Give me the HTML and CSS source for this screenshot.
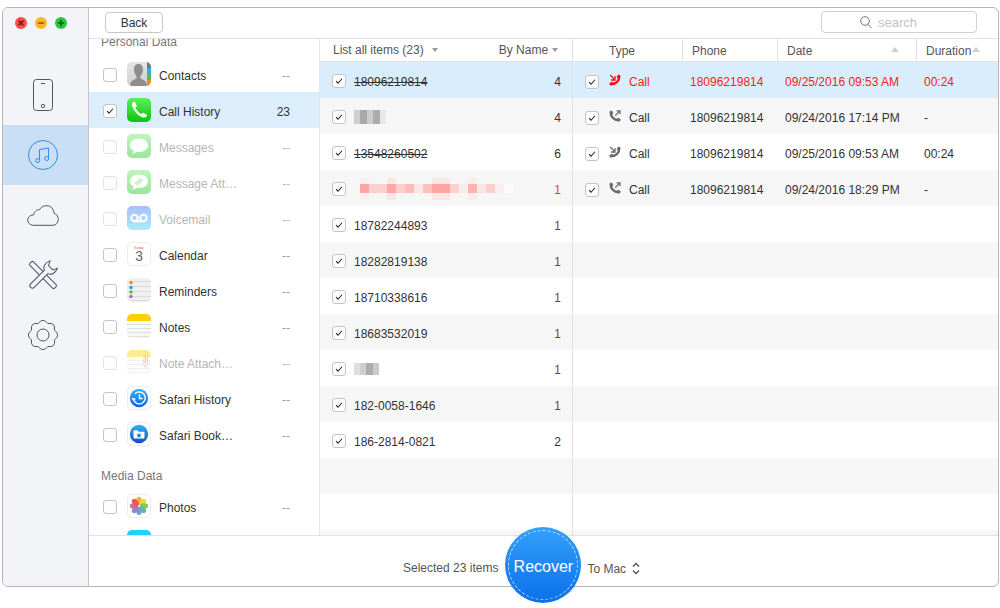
FILE: index.html
```html
<!DOCTYPE html>
<html lang="en">
<head>
<meta charset="utf-8">
<title>Recover</title>
<link rel="stylesheet" href="styles.css">
</head>
<body>
<svg class="sprite" width="0" height="0" aria-hidden="true">
  <symbol id="chk" viewBox="0 0 14 14"><path d="M3.6 7.2 L5.9 9.6 L10.4 4.4" fill="none" stroke="currentColor" stroke-width="1.2"/></symbol>
  <symbol id="out" viewBox="0 0 12 12">
    <path d="M1.7 2 C1.7 6.8 5 10.2 10 10.3" fill="none" stroke="currentColor" stroke-width="2.5"/>
    <path d="M.4 1.6 L3 .4 L4.3 3.4 L2.6 4.6Z M7.4 9.6 L8.9 7.8 L11.8 9.2 L10.8 11.8Z" fill="currentColor"/>
    <path d="M6.2 5.6 L10.8 1 M7.6 .9 H11 V4.3" fill="none" stroke="currentColor" stroke-width="1.2"/>
  </symbol>
  <symbol id="in" viewBox="0 0 12 12">
    <path d="M10.3 2 C10.3 6.8 7 10.2 2 10.3" fill="none" stroke="currentColor" stroke-width="2.5"/>
    <path d="M11.6 1.6 L9 .4 L7.7 3.4 L9.4 4.6Z M4.6 9.6 L3.1 7.8 L.2 9.2 L1.2 11.8Z" fill="currentColor"/>
    <path d="M1.2 1 L5.8 5.6 M2 6 H6 V2" fill="none" stroke="currentColor" stroke-width="1.3"/>
  </symbol>
  <symbol id="bubble" viewBox="0 0 24 24"><path d="M12 4.5 C6.5 4.5 3 7.6 3 11.2 C3 13.6 4.4 15.5 6.6 16.7 C6.3 18 5.6 19 5 19.6 C6.8 19.6 8.4 19 9.6 17.8 C10.4 17.9 11.2 18 12 18 C17.5 18 21 14.8 21 11.2 C21 7.6 17.5 4.5 12 4.5Z" fill="#fff"/></symbol>
</svg>
<div class="window">
  <aside class="sidebar">
    <div class="lights">
      <span class="light l-red"><svg viewBox="0 0 12 12"><path d="M3.6 3.6 L8.4 8.4 M8.4 3.6 L3.6 8.4" stroke="#8c1512" stroke-width="1.6"/></svg></span>
      <span class="light l-yellow"><svg viewBox="0 0 12 12"><path d="M3 6 H9" stroke="#90590a" stroke-width="1.6"/></svg></span>
      <span class="light l-green"><svg viewBox="0 0 12 12"><path d="M2.8 6 H9.2 M6 2.8 V9.2" stroke="#0a5e12" stroke-width="1.6"/></svg></span>
    </div>
    <nav class="nav">
      <div class="nav-item"><svg width="20" height="32" viewBox="0 0 20 32" fill="none" stroke="#4b5864"><rect x=".5" y=".5" width="19" height="31" rx="3"/><path d="M8 4.500 H12"/><circle cx="10" cy="27" r="1.700"/></svg></div>
      <div class="nav-item active"><svg width="30" height="30" viewBox="0 0 30 30" fill="none" stroke="#2a8cf0"><circle cx="15" cy="15" r="14.500"/><path d="M11.500 20 V9.500 L20.500 8 V18"/><circle cx="9.700" cy="20.500" r="2"/><circle cx="18.700" cy="18.500" r="2"/></svg></div>
      <div class="nav-item"><svg width="32" height="21" viewBox="0 0 32 21" fill="none" stroke="#4b5864"><path d="M7 20.300 C3 20.300 .7 17.800 .7 15 C.7 12 3.200 10 6.500 10 C7.500 6 10 4.300 12.400 4.800 C14 1.800 17 .7 19.500 .7 C24 .7 26.800 4 26.800 8 C29.500 9 31.300 11.500 31.300 14.500 C31.300 18 28.500 20.300 26 20.300Z"/></svg></div>
      <div class="nav-item"><svg width="32" height="32" viewBox="0 0 32 32" fill="#f2f4f8" stroke="#4b5864"><rect x="13.500" y="-1.500" width="5" height="35" rx="1.500" transform="rotate(-45 16 16)"/><path d="M13.500 31 a2.500 2.500 0 0 0 5 0 L18.500 11.500 C22 10.500 23.500 6 21.500 1 L19.300 5.500 L13.300 5.500 L11 1 C8.500 6 10 10.500 13.500 11.500Z" transform="rotate(45 16 16)"/></svg></div>
      <div class="nav-item"><svg width="30" height="30" viewBox="0 0 30 30" fill="none" stroke="#4b5864"><path d="M26.500 10.200 Q33 15 26.500 19.800 Q27.700 27.700 19.800 26.500 Q15 33 10.200 26.500 Q2.300 27.700 3.500 19.800 Q-3 15 3.500 10.200 Q2.300 2.300 10.200 3.500 Q15 -3 19.800 3.500 Q27.700 2.300 26.500 10.200Z"/><circle cx="15" cy="15" r="6"/></svg></div>
    </nav>
  </aside>
  <div class="main">
    <header class="toolbar">
      <button class="back">Back</button>
      <div class="search"><svg width="12" height="13" viewBox="0 0 12 13" fill="none" stroke="#777"><circle cx="5" cy="5" r="4.300"/><path d="M8 8.300 L11.500 12"/></svg><span>search</span></div>
    </header>
    <div class="content">
      <section class="cats">
        <div class="cat-label first">Personal Data</div>
        <div class="cat"><span class="cb"></span><span class="tile t-contacts"><svg viewBox="0 0 24 24"><path d="M3 24 C3 19 7 17.500 9.500 16.500 V14 C8 12.500 7 10 7 7.500 C7 3.500 9 2 11.500 2 C14 2 16 3.500 16 7.500 C16 10 15 12.500 13.500 14 V16.500 C16 17.500 20 19 20 24Z" fill="#8d8d8d"/><rect x="20" y="0" width="4" height="6" fill="#777"/><rect x="20" y="6" width="4" height="6" fill="#3aa6e0"/><rect x="20" y="12" width="4" height="6" fill="#5cb85c"/><rect x="20" y="18" width="4" height="6" fill="#ef8a1c"/></svg></span><span class="name">Contacts</span><span class="num">--</span></div>
        <div class="cat sel"><span class="cb"><svg><use href="#chk"/></svg></span><span class="tile t-phone"><svg viewBox="0 0 24 24"><path d="M6.500 4 C5 5 4.500 6.500 5.500 9 C7 13 10.500 17 14.500 19 C16.500 20 18.500 19.800 19.800 18.300 C20.200 17.800 20 17.200 19.500 16.800 L16.800 15 C16.200 14.600 15.700 14.800 15.200 15.300 L14.300 16.200 C12 15 9.500 12.200 8.400 9.800 L9.300 8.900 C9.800 8.400 9.900 7.800 9.600 7.300 L8 4.300 C7.600 3.800 7 3.700 6.500 4Z" fill="#fff"/></svg></span><span class="name">Call History</span><span class="num dark">23</span></div>
        <div class="cat off"><span class="cb"></span><span class="tile t-msg"><svg><use href="#bubble"/></svg></span><span class="name">Messages</span><span class="num">--</span></div>
        <div class="cat off"><span class="cb"></span><span class="tile t-msg"><svg><use href="#bubble"/></svg><svg class="clip" viewBox="0 0 24 24"><path d="M8 14 L14 8.500 M10 15 L16 9.500" stroke="#6fd06f" stroke-width="1.500" fill="none"/></svg></span><span class="name">Message Att…</span><span class="num">--</span></div>
        <div class="cat off"><span class="cb"></span><span class="tile t-voice"><svg viewBox="0 0 24 24" fill="none" stroke="#fff" stroke-width="2"><circle cx="7.500" cy="12" r="3.200"/><circle cx="16.500" cy="12" r="3.200"/><path d="M7.500 15.200 H16.500"/></svg></span><span class="name">Voicemail</span><span class="num">--</span></div>
        <div class="cat"><span class="cb"></span><span class="tile t-white"><svg viewBox="0 0 24 24"><text x="12" y="6.500" text-anchor="middle" class="cal-day">Sunday</text><text x="12" y="20" text-anchor="middle" class="cal-num">3</text></svg></span><span class="name">Calendar</span><span class="num">--</span></div>
        <div class="cat"><span class="cb"></span><span class="tile t-rem"><svg viewBox="0 0 24 24"><g stroke="#dcdcdc"><path d="M0 3.500 H24 M0 8.500 H24 M0 13.500 H24 M0 18.500 H24 M0 22.500 H24"/></g><circle cx="4" cy="4.500" r="1.700" fill="#f5871f"/><circle cx="4" cy="9.500" r="1.700" fill="#1e9bf0"/><circle cx="4" cy="14" r="1.700" fill="#3cc63c"/><circle cx="4" cy="18.500" r="1.700" fill="#c45ae0"/></svg></span><span class="name">Reminders</span><span class="num">--</span></div>
        <div class="cat"><span class="cb"></span><span class="tile t-notes"><svg viewBox="0 0 24 24"><g stroke="#dedede"><path d="M0 10.500 H24 M0 14.500 H24 M0 18.500 H24 M0 22.500 H24"/></g></svg></span><span class="name">Notes</span><span class="num">--</span></div>
        <div class="cat off"><span class="cb"></span><span class="tile t-notes"><svg viewBox="0 0 24 24"><g stroke="#dedede"><path d="M0 10.500 H24 M0 14.500 H24 M0 18.500 H24 M0 22.500 H24"/></g><path d="M17 5 V15 C17 17.500 20.500 17.500 20.500 15 V3.500 C20.500 1.500 18.500 1.500 18.500 3.500 V13" fill="none" stroke="#c9a23a"/></svg></span><span class="name">Note Attach…</span><span class="num">--</span></div>
        <div class="cat"><span class="cb"></span><span class="tile t-white"><svg viewBox="0 0 24 24"><defs><linearGradient id="gh" x1="0" y1="0" x2="0" y2="1"><stop offset="0" stop-color="#38b4f8"/><stop offset="1" stop-color="#1060e0"/></linearGradient></defs><circle cx="12" cy="12" r="10" fill="url(#gh)"/><path d="M6 13.500 A6.500 6.500 0 1 0 7.500 7.500 M12.500 8 V12.500 H16 M4.500 12 L6 14 L8 12.500" fill="none" stroke="#fff" stroke-width="1.500"/></svg></span><span class="name">Safari History</span><span class="num">--</span></div>
        <div class="cat"><span class="cb"></span><span class="tile t-white"><svg viewBox="0 0 24 24"><defs><linearGradient id="gb" x1="0" y1="0" x2="0" y2="1"><stop offset="0" stop-color="#30b0f8"/><stop offset="1" stop-color="#0a50c0"/></linearGradient></defs><circle cx="12" cy="12" r="10" fill="url(#gb)"/><path d="M6 9.500 C6 8.500 6.500 8 7.500 8 H10.500 L11.500 9.500 H16.500 C17.500 9.500 18 10 18 11 V15.500 C18 16.500 17.500 17 16.500 17 H7.500 C6.500 17 6 16.500 6 15.500Z" fill="#fff"/><path d="M12 10.500 L12.900 12.500 L15 12.700 L13.400 14 L13.900 16 L12 15 L10.100 16 L10.600 14 L9 12.700 L11.100 12.500Z" fill="#1a70e0"/></svg></span><span class="name">Safari Book…</span><span class="num">--</span></div>
        <div class="cat-label">Media Data</div>
        <div class="cat"><span class="cb"></span><span class="tile t-white"><svg viewBox="0 0 24 24"><g class="petals"><ellipse cx="12" cy="6.500" rx="3" ry="4.500" fill="#f6a623"/><ellipse cx="12" cy="6.500" rx="3" ry="4.500" fill="#e8d32e" transform="rotate(45 12 12)"/><ellipse cx="12" cy="6.500" rx="3" ry="4.500" fill="#7cc243" transform="rotate(90 12 12)"/><ellipse cx="12" cy="6.500" rx="3" ry="4.500" fill="#4fb58f" transform="rotate(135 12 12)"/><ellipse cx="12" cy="6.500" rx="3" ry="4.500" fill="#5a9bd8" transform="rotate(180 12 12)"/><ellipse cx="12" cy="6.500" rx="3" ry="4.500" fill="#8a78c8" transform="rotate(225 12 12)"/><ellipse cx="12" cy="6.500" rx="3" ry="4.500" fill="#c75a9a" transform="rotate(270 12 12)"/><ellipse cx="12" cy="6.500" rx="3" ry="4.500" fill="#e8483c" transform="rotate(315 12 12)"/></g></svg></span><span class="name">Photos</span><span class="num">--</span></div>
        <div class="cat"><span class="cb hidden"></span><span class="tile t-video"></span></div>
      </section>
      <section class="list">
        <div class="list-head"><span>List all items (23)</span><i class="caret"></i><span class="by">By Name</span><i class="caret tight"></i></div>
        <div class="rows">
          <div class="row sel"><span class="cb"><svg><use href="#chk"/></svg></span><span class="lbl struck">18096219814</span><span class="cnt">4</span></div>
          <div class="row"><span class="cb"><svg><use href="#chk"/></svg></span><svg class="mosaic" width="33" height="16" viewBox="0 0 33 16" shape-rendering="crispEdges"><rect x="1" y="1" width="6" height="14" fill="#cfcfcf"/><rect x="7" y="1" width="7" height="14" fill="#a8a8a8"/><rect x="14" y="1" width="6" height="14" fill="#cccccc"/><rect x="20" y="1" width="7" height="14" fill="#acacac"/><rect x="27" y="1" width="6" height="14" fill="#e8e8e8"/></svg><span class="cnt">4</span></div>
          <div class="row"><span class="cb"><svg><use href="#chk"/></svg></span><span class="lbl struck">13548260502</span><span class="cnt">6</span></div>
          <div class="row"><span class="cb"><svg><use href="#chk"/></svg></span><svg class="mosaic wide" width="154" height="22" viewBox="0 0 154 22" shape-rendering="crispEdges"><rect x="0" y="0" width="9" height="22" fill="#fbeeee"/><rect x="0" y="6" width="9" height="9" fill="#fca5a5"/><rect x="9" y="6" width="18" height="9" fill="#fbd0ce"/><rect x="27" y="0" width="9" height="22" fill="#fbe6e5"/><rect x="27" y="6" width="9" height="9" fill="#fca8a6"/><rect x="36" y="6" width="9" height="9" fill="#fbcfcd"/><rect x="45" y="6" width="9" height="9" fill="#fcbdbb"/><rect x="54" y="6" width="9" height="9" fill="#f9e6e6"/><rect x="63" y="6" width="9" height="9" fill="#fcc0be"/><rect x="72" y="0" width="18" height="22" fill="#fbe6e5"/><rect x="72" y="6" width="18" height="9" fill="#fca6a3"/><rect x="90" y="6" width="9" height="9" fill="#fcd2d0"/><rect x="99" y="6" width="9" height="9" fill="#f9ecec"/><rect x="108" y="0" width="9" height="22" fill="#fbecec"/><rect x="108" y="6" width="9" height="9" fill="#fcb4b2"/><rect x="117" y="6" width="9" height="9" fill="#f8e6e6"/><rect x="126" y="6" width="9" height="9" fill="#fccfcd"/><rect x="135" y="6" width="9" height="9" fill="#f8eeee"/><rect x="144" y="6" width="9" height="9" fill="#fafafa"/></svg><span class="cnt warn">1</span></div>
          <div class="row"><span class="cb"><svg><use href="#chk"/></svg></span><span class="lbl">18782244893</span><span class="cnt tinted">1</span></div>
          <div class="row"><span class="cb"><svg><use href="#chk"/></svg></span><span class="lbl">18282819138</span><span class="cnt tinted">1</span></div>
          <div class="row"><span class="cb"><svg><use href="#chk"/></svg></span><span class="lbl">18710338616</span><span class="cnt tinted">1</span></div>
          <div class="row"><span class="cb"><svg><use href="#chk"/></svg></span><span class="lbl">18683532019</span><span class="cnt tinted">1</span></div>
          <div class="row"><span class="cb"><svg><use href="#chk"/></svg></span><svg class="mosaic short" width="33" height="14" viewBox="0 0 33 14" shape-rendering="crispEdges"><rect x="1" y="1" width="6" height="12" fill="#dfdfdf"/><rect x="7" y="1" width="6" height="12" fill="#cfcfcf"/><rect x="13" y="1" width="7" height="12" fill="#b0abb0"/><rect x="20" y="1" width="6" height="12" fill="#cdc8cd"/></svg><span class="cnt tinted">1</span></div>
          <div class="row"><span class="cb"><svg><use href="#chk"/></svg></span><span class="lbl">182-0058-1646</span><span class="cnt tinted">1</span></div>
          <div class="row"><span class="cb"><svg><use href="#chk"/></svg></span><span class="lbl">186-2814-0821</span><span class="cnt">2</span></div>
          <div class="row"></div>
          <div class="row"></div>
          <div class="row"></div>
        </div>
      </section>
      <section class="detail">
        <div class="detail-head">
          <div class="th th-type">Type</div>
          <div class="th">Phone</div>
          <div class="th th-date">Date<i class="caret up"></i></div>
          <div class="th th-dur">Duration<i class="caret up near"></i></div>
        </div>
        <div class="rows">
          <div class="drow sel alert"><div class="td td-type"><span class="cb"><svg><use href="#chk"/></svg></span><svg class="call"><use href="#in"/></svg><span>Call</span></div><div class="td">18096219814</div><div class="td">09/25/2016 09:53 AM</div><div class="td">00:24</div></div>
          <div class="drow"><div class="td td-type"><span class="cb"><svg><use href="#chk"/></svg></span><svg class="call"><use href="#out"/></svg><span>Call</span></div><div class="td">18096219814</div><div class="td">09/24/2016 17:14 PM</div><div class="td">-</div></div>
          <div class="drow"><div class="td td-type"><span class="cb"><svg><use href="#chk"/></svg></span><svg class="call"><use href="#in"/></svg><span>Call</span></div><div class="td">18096219814</div><div class="td">09/25/2016 09:53 AM</div><div class="td">00:24</div></div>
          <div class="drow"><div class="td td-type"><span class="cb"><svg><use href="#chk"/></svg></span><svg class="call"><use href="#out"/></svg><span>Call</span></div><div class="td">18096219814</div><div class="td">09/24/2016 18:29 PM</div><div class="td">-</div></div>
          <div class="drow"></div><div class="drow"></div><div class="drow"></div><div class="drow"></div><div class="drow"></div><div class="drow"></div><div class="drow"></div><div class="drow"></div><div class="drow"></div><div class="drow"></div>
        </div>
      </section>
    </div>
    <footer class="footer">
      <span class="selected">Selected 23 items</span>
      <button class="recover">Recover</button>
      <span class="dest">To Mac</span>
      <svg class="updown" width="8" height="13" viewBox="0 0 8 13" fill="none" stroke="#444" stroke-width="1.200"><path d="M1 4.500 L4 1.300 L7 4.500 M1 8.500 L4 11.700 L7 8.500"/></svg>
    </footer>
  </div>
</div>
</body>
</html>
```

FILE: styles.css
```css
* { box-sizing: border-box; }
html, body { margin: 0; padding: 0; background: #fff; }
body {
  font-family: "Liberation Sans", Arial, sans-serif;
  font-size: 12px;
  color: #333;
  width: 1000px;
  height: 608px;
  overflow: hidden;
  padding: 7px 0 0 2px;
}
.sprite { position: absolute; }

.window {
  width: 997px;
  height: 580px;
  border: 1px solid #b5b5b5;
  border-radius: 6px;
  display: flex;
  background: #fff;
}

/* sidebar */
.sidebar {
  width: 86px;
  flex: none;
  background: #f2f4f8;
  border-right: 1px solid #c4c6ca;
  border-radius: 5px 0 0 5px;
}
.lights { height: 57px; display: flex; gap: 8px; padding: 9px 0 0 12px; }
.light { width: 12px; height: 12px; border-radius: 50%; display: block; }
.light svg { width: 12px; height: 12px; display: block; }
.l-red { background: #fc4d4a; }
.l-yellow { background: #fdb52a; }
.l-green { background: #2ac83e; }
.nav-item { height: 60px; display: flex; align-items: center; justify-content: center; padding-right: 5px; }
.nav-item.active { background: #c9dff5; }

/* main */
.main { flex: 1; min-width: 0; display: flex; flex-direction: column; }
.toolbar {
  height: 31px;
  flex: none;
  border-bottom: 1px solid #e2e2e2;
  display: flex;
  align-items: flex-start;
  justify-content: space-between;
  padding: 4px 21px 0 16px;
}
.back {
  width: 58px;
  height: 21px;
  padding: 0;
  background: #fff;
  border: 1px solid #c8c8c8;
  border-radius: 4px;
  font: 12px "Liberation Sans", Arial, sans-serif;
  color: #333;
}
.search {
  width: 156px;
  height: 22px;
  margin-top: -1px;
  padding-left: 38px;
  border: 1px solid #d0d0d0;
  border-radius: 4px;
  display: flex;
  align-items: center;
  gap: 6px;
  font-size: 13px;
  color: #c4c4c4;
}

.content { flex: 1; min-height: 0; display: flex; overflow: hidden; }

/* categories */
.cats {
  width: 231px;
  flex: none;
  border-right: 1px solid #e6e6e6;
  overflow: hidden;
}
.cat-label {
  height: 36px;
  padding: 17px 0 0 12px;
  line-height: 14px;
  color: #777;
}
.cat-label.first { margin-top: -19px; padding-top: 15px; }
.cat {
  height: 36px;
  display: flex;
  align-items: center;
  padding: 0 29px 0 14px;
}
.cat.sel { background: #dcedfb; }
.cb {
  width: 14px;
  height: 14px;
  flex: none;
  background: #fdfdfd;
  border: 1px solid #c4c4c4;
  border-radius: 3px;
  color: #222;
  display: block;
}
.cb svg { width: 12px; height: 12px; display: block; }
.cb.hidden { visibility: hidden; }
.cat .cb { margin-top: 2px; }
.tile {
  width: 24px;
  height: 24px;
  flex: none;
  margin: 0 8px 0 10px;
  border-radius: 5px;
  overflow: hidden;
  display: block;
  position: relative;
}
.tile svg { width: 24px; height: 24px; display: block; }
.tile .clip { position: absolute; left: 0; top: 0; }
.name { flex: 1; white-space: nowrap; padding-top: 4px; }
.num { color: #999; padding-top: 4px; }
.num.dark { color: #333; }
.cat.off .name, .cat.off .num { color: #b6b6b6; }
.cat.off .cb { border-color: #e2e2e2; }
.cat.off .tile { opacity: .42; }
.t-contacts { background: linear-gradient(#e4e4e4, #cfcfcf); }
.t-phone { background: linear-gradient(#5cf05a, #0bc50d); }
.t-msg { background: linear-gradient(#68e860, #12c516); }
.t-voice { background: linear-gradient(#3a66f0, #38d0fa); }
.t-white { background: #fff; border: 1px solid #ececec; }
.t-white svg { width: 22px; height: 22px; }
.t-rem { background: #f0f0f0; }
.t-notes { background: linear-gradient(#ffd000 0, #ffd000 7px, #fbfbfb 7px, #f6f6f6 100%); }
.t-video { background: #1dd2fb; }
.cal-day { font: 3px "Liberation Sans", Arial, sans-serif; fill: #e05050; }
.cal-num { font: 15px "Liberation Sans", Arial, sans-serif; fill: #666; }
.petals { opacity: .9; }

/* list */
.list {
  width: 253px;
  flex: none;
  border-right: 1px solid #e2e2e2;
  display: flex;
  flex-direction: column;
  min-height: 0;
}
.list-head {
  height: 23px;
  flex: none;
  border-bottom: 1px solid #e2e2e2;
  display: flex;
  align-items: flex-start;
  padding-left: 13px;
  line-height: 23px;
  color: #555;
}
.caret {
  width: 0;
  height: 0;
  border: 3px solid transparent;
  border-top: 4px solid #999;
  border-bottom: 0;
  margin: 9px 0 0 8px;
  display: block;
}
.caret.tight { margin-left: 4px; }
.by { margin-left: 61px; }
.rows { flex: 1; min-height: 0; overflow: hidden; }
.row {
  height: 36px;
  display: flex;
  align-items: center;
  padding: 2px 11px 0 12px;
}
.row:nth-child(even), .drow:nth-child(even) { background: #f6f6f6; }
.row.sel, .drow.sel { background: #daedfc; }
.lbl { margin-left: 8px; flex: 1; padding-top: 1px; }
.struck { text-decoration: line-through; }
.mosaic { margin-left: 7px; display: block; }
.mosaic.wide { margin-left: 14px; }
.cnt { margin-left: auto; padding-top: 1px; }
.cnt.warn { color: #f23c2c; }
.cnt.tinted { color: #943a30; }

/* detail */
.detail { flex: 1; min-width: 0; display: flex; flex-direction: column; }
.detail-head, .drow {
  display: grid;
  grid-template-columns: 110px 95px 139px 1fr;
}
.detail-head {
  height: 23px;
  flex: none;
  border-bottom: 1px solid #e2e2e2;
  line-height: 25px;
  color: #555;
}
.th { padding-left: 9px; border-right: 1px solid #e2e2e2; display: flex; justify-content: flex-start; }
.th-type { padding-left: 36px; }
.th-dur { border-right: 0; }
.th-date { justify-content: space-between; padding-right: 17px; }
.caret.up {
  border: 4px solid transparent;
  border-top: 0;
  border-bottom: 5px solid #cfcfcf;
  margin: 8px 0 0 0;
}
.caret.near { margin-left: 1px; }
.drow { height: 36px; }
.td { padding: 3px 0 0 7px; display: flex; align-items: center; white-space: nowrap; }
.td-type { padding-left: 12px; }
.call { width: 12px; height: 12px; margin: -3px 8px 0 10px; color: #6a6a6a; flex: none; }
.alert { color: #f92020; }
.alert .cb { color: #222; }
.alert .call { color: #f91010; }

/* footer */
.footer {
  height: 51px;
  flex: none;
  border-top: 1px solid #e2e2e2;
  display: flex;
  align-items: flex-start;
  padding-left: 314px;
  border-radius: 0 0 5px 0;
}
.selected { margin-top: 25px; line-height: 14px; color: #555; }
.dest { margin: 26px 0 0 6px; line-height: 14px; color: #555; }
.updown { margin: 26px 0 0 6px; display: block; }
.recover {
  width: 76px;
  height: 76px;
  flex: none;
  margin: -9px 0 -17px 7px;
  padding: 4px 0 0;
  border: 0;
  border-radius: 50%;
  background: linear-gradient(#35a0fb, #0a70ea);
  color: #fff;
  font: 16px "Liberation Sans", Arial, sans-serif;
  position: relative;
}
.recover::before {
  content: "";
  position: absolute;
  inset: 3px;
  border: 1px dashed rgba(255, 255, 255, .7);
  border-radius: 50%;
}
```
